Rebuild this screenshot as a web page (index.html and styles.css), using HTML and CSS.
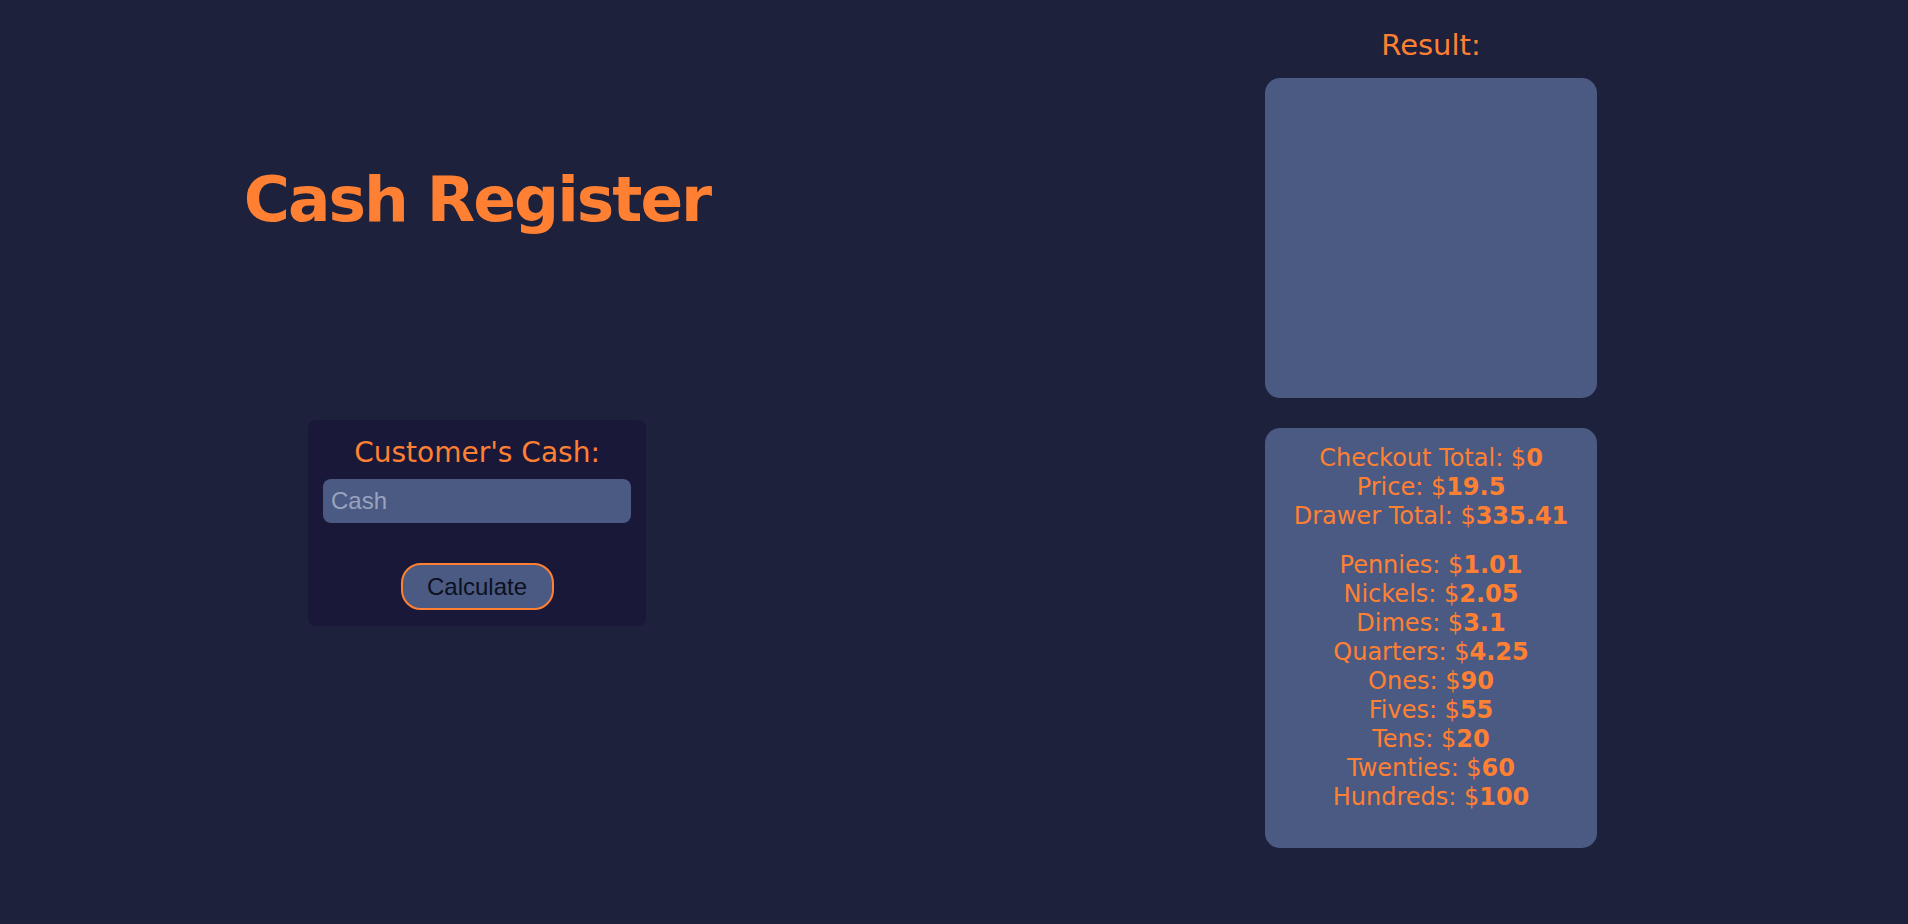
FILE: index.html
```html
<!DOCTYPE html>
<html lang="en">
<head>
<meta charset="utf-8">
<title>Cash Register</title>
<link rel="stylesheet" href="styles.css">
</head>
<body>
<main class="page">
  <section class="left">
    <h1 class="title">Cash Register</h1>
    <div class="cash-panel">
      <label class="cash-label" for="cash">Customer's Cash:</label>
      <input class="cash-input" id="cash" type="text" placeholder="Cash">
      <button class="calc-btn" type="button">Calculate</button>
    </div>
  </section>
  <section class="right">
    <h2 class="result-title">Result:</h2>
    <div class="result-box"></div>
    <div class="drawer-box">
      <div class="group">
        <p>Checkout Total: $<b>0</b></p>
        <p>Price: $<b>19.5</b></p>
        <p>Drawer Total: $<b>335.41</b></p>
      </div>
      <div class="group gap">
        <p>Pennies: $<b>1.01</b></p>
        <p>Nickels: $<b>2.05</b></p>
        <p>Dimes: $<b>3.1</b></p>
        <p>Quarters: $<b>4.25</b></p>
        <p>Ones: $<b>90</b></p>
        <p>Fives: $<b>55</b></p>
        <p>Tens: $<b>20</b></p>
        <p>Twenties: $<b>60</b></p>
        <p>Hundreds: $<b>100</b></p>
      </div>
    </div>
  </section>
</main>
</body>
</html>
```

FILE: styles.css
```css
* { box-sizing: border-box; }

html, body {
  margin: 0;
  padding: 0;
  background: #1d213b;
  height: 100%;
}

body {
  font-family: "DejaVu Sans", Verdana, sans-serif;
  color: #ff8033;
}

.page {
  display: flex;
  width: 100%;
}

.left, .right {
  flex: 1 1 0;
  display: flex;
  flex-direction: column;
  align-items: center;
}

.title {
  margin: 162px 0 0;
  font-size: 63px;
  line-height: 76px;
  font-weight: bold;
  letter-spacing: -2px;
  color: #ff8033;
}

.cash-panel {
  margin-top: 182px;
  width: 338px;
  height: 206px;
  background: #1a1839;
  border-radius: 8px;
  padding: 16px 15px;
  display: flex;
  flex-direction: column;
  align-items: center;
}

.cash-label {
  font-size: 28px;
  line-height: 34px;
  color: #ff8033;
}

.cash-input {
  margin-top: 9px;
  width: 100%;
  height: 44px;
  border: none;
  border-radius: 8px;
  background: #4a5a82;
  padding: 0 8px;
  font-family: "Liberation Sans", Arial, sans-serif;
  font-size: 24px;
  color: #0d1020;
  outline: none;
}

.cash-input::placeholder {
  color: #98a2bf;
}

.calc-btn {
  margin-top: 40px;
  width: 153px;
  height: 47px;
  border: 2px solid #ff8033;
  border-radius: 20px;
  background: #4a5a82;
  font-family: "Liberation Sans", Arial, sans-serif;
  font-size: 24px;
  color: #0d1020;
  padding: 0;
}

.result-title {
  margin: 28px 0 0;
  font-size: 29px;
  line-height: 35px;
  font-weight: normal;
  color: #ff8033;
}

.result-box {
  margin-top: 15px;
  width: 332px;
  height: 320px;
  background: #4a5a82;
  border-radius: 15px;
}

.drawer-box {
  margin-top: 30px;
  width: 332px;
  height: 420px;
  background: #4a5a82;
  border-radius: 15px;
  padding-top: 16px;
  text-align: center;
  font-size: 24px;
  line-height: 29px;
}

.group p {
  margin: 0;
}

.group.gap {
  margin-top: 20px;
}
```
